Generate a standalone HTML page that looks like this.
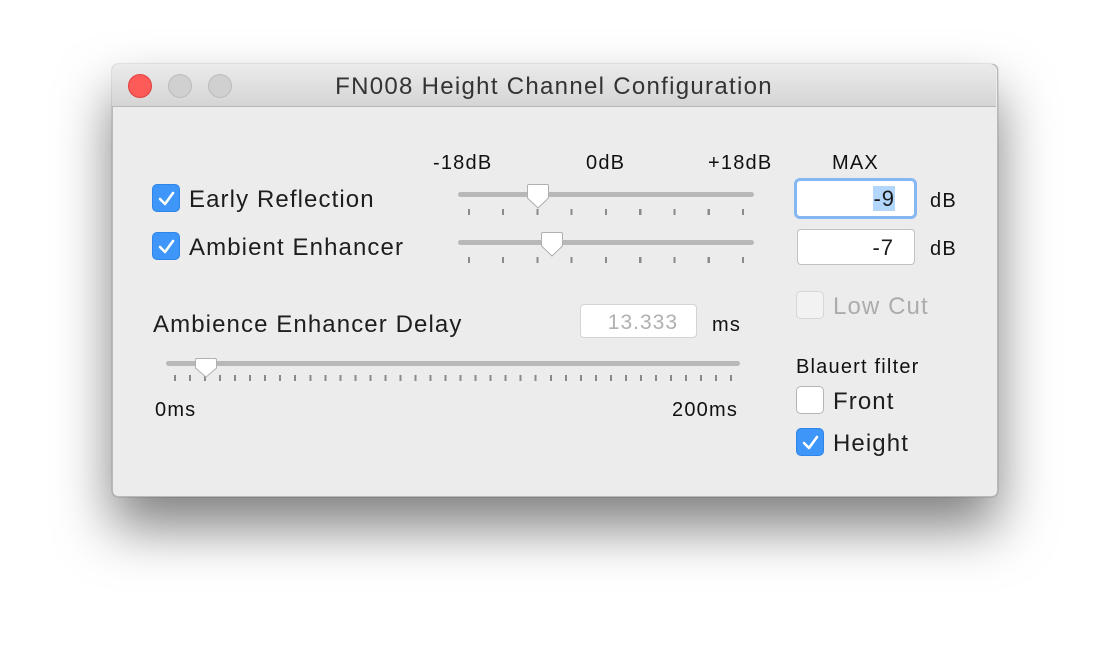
<!DOCTYPE html>
<html><head><style>
*{margin:0;padding:0;box-sizing:border-box}
body{width:1110px;height:658px;background:#fff;position:relative;overflow:hidden;font-family:"Liberation Sans",sans-serif;color:#1a1a1a}
.win{position:absolute;left:112px;top:64px;width:886px;height:433px;background:#ececec;border-radius:6px;border:1px solid #b9b9b9;box-shadow:0 30px 55px rgba(0,0,0,.5),0 0 1px rgba(0,0,0,.5)}
.title{position:absolute;left:0;top:0;width:884px;height:43px;background:linear-gradient(#ebebeb,#d5d5d5);border-bottom:1px solid #b7b7b7;border-radius:6px 6px 0 0;text-align:center;font-size:24px;letter-spacing:1.3px;line-height:46px;color:#333}
.tl{position:absolute;top:10px;width:24px;height:24px;border-radius:50%;background:#d0d0d0;border:1px solid #bcbcbc}
.a{position:absolute;white-space:nowrap}
.cb{position:absolute;width:28px;height:28px;border-radius:5px;background:#3e97f8;border:1px solid #2f86ea}
.cb svg{position:absolute;left:3px;top:3px}
.cbw{position:absolute;width:28px;height:28px;border-radius:5px;background:#fff;border:1px solid #b4b4b4}
.lbl{font-size:24px;letter-spacing:1.1px;color:#1e1e1e}
.sm{font-size:20px;letter-spacing:1.2px;color:#111}
.track{position:absolute;height:5px;border-radius:3px;background:#b8b8b8}
.ticks{position:absolute;height:6px}
.thumb{position:absolute;width:24px;height:26px}
.tf{position:absolute;background:#fff;border:1px solid #c2c2c2;border-radius:4px;text-align:right;font-size:22px;letter-spacing:1px;padding-right:20px;line-height:35px}
</style></head><body>
<div class="win"></div>
<div style="position:absolute;left:112px;top:64px;width:886px;height:44px">
<div class="title">FN008 Height Channel Configuration</div>
<div class="tl" style="left:16px;background:#fc5b57;border-color:#df3e3b"></div>
<div class="tl" style="left:56px"></div>
<div class="tl" style="left:96px"></div>
</div>

<div class="a sm" style="left:433px;top:152px">-18dB</div>
<div class="a sm" style="left:586px;top:152px">0dB</div>
<div class="a sm" style="left:708px;top:152px">+18dB</div>
<div class="a sm" style="left:832px;top:152px">MAX</div>

<div class="cb" style="left:152px;top:184px"><svg width="22" height="22"><path d="M4 11 L9 16 L17 5" stroke="#fff" stroke-width="2.6" fill="none" stroke-linecap="round" stroke-linejoin="round"/></svg></div>
<div class="a lbl" style="left:189px;top:186px">Early Reflection</div>
<div class="cb" style="left:152px;top:232px"><svg width="22" height="22"><path d="M4 11 L9 16 L17 5" stroke="#fff" stroke-width="2.6" fill="none" stroke-linecap="round" stroke-linejoin="round"/></svg></div>
<div class="a lbl" style="left:189px;top:234px">Ambient Enhancer</div>

<div class="track" style="left:458px;top:192px;width:296px"></div>
<div class="ticks" style="left:468px;top:209px;width:277px;background:repeating-linear-gradient(90deg,#8a8a8a 0 2px,transparent 2px 34.25px)"></div>
<svg class="thumb" style="left:526px;top:183px" viewBox="0 0 24 26"><path d="M3 1.5 H21 Q22.5 1.5 22.5 3 V15 L12 25 L1.5 15 V3 Q1.5 1.5 3 1.5Z" fill="#fff" stroke="#b0b0b0"/></svg>
<div class="track" style="left:458px;top:240px;width:296px"></div>
<div class="ticks" style="left:468px;top:257px;width:277px;background:repeating-linear-gradient(90deg,#8a8a8a 0 2px,transparent 2px 34.25px)"></div>
<svg class="thumb" style="left:540px;top:231px" viewBox="0 0 24 26"><path d="M3 1.5 H21 Q22.5 1.5 22.5 3 V15 L12 25 L1.5 15 V3 Q1.5 1.5 3 1.5Z" fill="#fff" stroke="#b0b0b0"/></svg>

<div class="tf" style="left:794px;top:178px;width:123px;height:41px;border:3px solid #86b7f3;border-radius:6px;line-height:36px;padding-right:19px"><span style="background:#b3d6fd">-9</span></div>
<div class="a sm" style="left:930px;top:190px">dB</div>
<div class="tf" style="left:797px;top:229px;width:118px;height:36px">-7</div>
<div class="a sm" style="left:930px;top:238px">dB</div>

<div class="cbw" style="left:796px;top:291px;background:#f2f2f2;border-color:#d6d6d6"></div>
<div class="a lbl" style="left:833px;top:293px;color:#acacac">Low Cut</div>

<div class="a lbl" style="left:153px;top:311px">Ambience Enhancer Delay</div>
<div class="tf" style="left:580px;top:304px;width:117px;height:34px;color:#b0b0b0;border-color:#d4d4d4;font-size:21px;padding-right:18px">13.333</div>
<div class="a sm" style="left:712px;top:314px">ms</div>

<div class="track" style="left:166px;top:361px;width:574px"></div>
<div class="ticks" style="left:174px;top:375px;width:560px;background:repeating-linear-gradient(90deg,#8a8a8a 0 2px,transparent 2px 15.03px)"></div>
<svg class="thumb" style="left:194px;top:357px" viewBox="0 0 24 26"><path d="M3 1.5 H21 Q22.5 1.5 22.5 3 V11 L12 20 L1.5 11 V3 Q1.5 1.5 3 1.5Z" fill="#fff" stroke="#b0b0b0"/></svg>
<div class="a sm" style="left:155px;top:399px">0ms</div>
<div class="a sm" style="left:672px;top:399px">200ms</div>

<div class="a sm" style="left:796px;top:356px">Blauert filter</div>
<div class="cbw" style="left:796px;top:386px"></div>
<div class="a lbl" style="left:833px;top:388px">Front</div>
<div class="cb" style="left:796px;top:428px"><svg width="22" height="22"><path d="M4 11 L9 16 L17 5" stroke="#fff" stroke-width="2.6" fill="none" stroke-linecap="round" stroke-linejoin="round"/></svg></div>
<div class="a lbl" style="left:833px;top:430px">Height</div>
</body></html>
